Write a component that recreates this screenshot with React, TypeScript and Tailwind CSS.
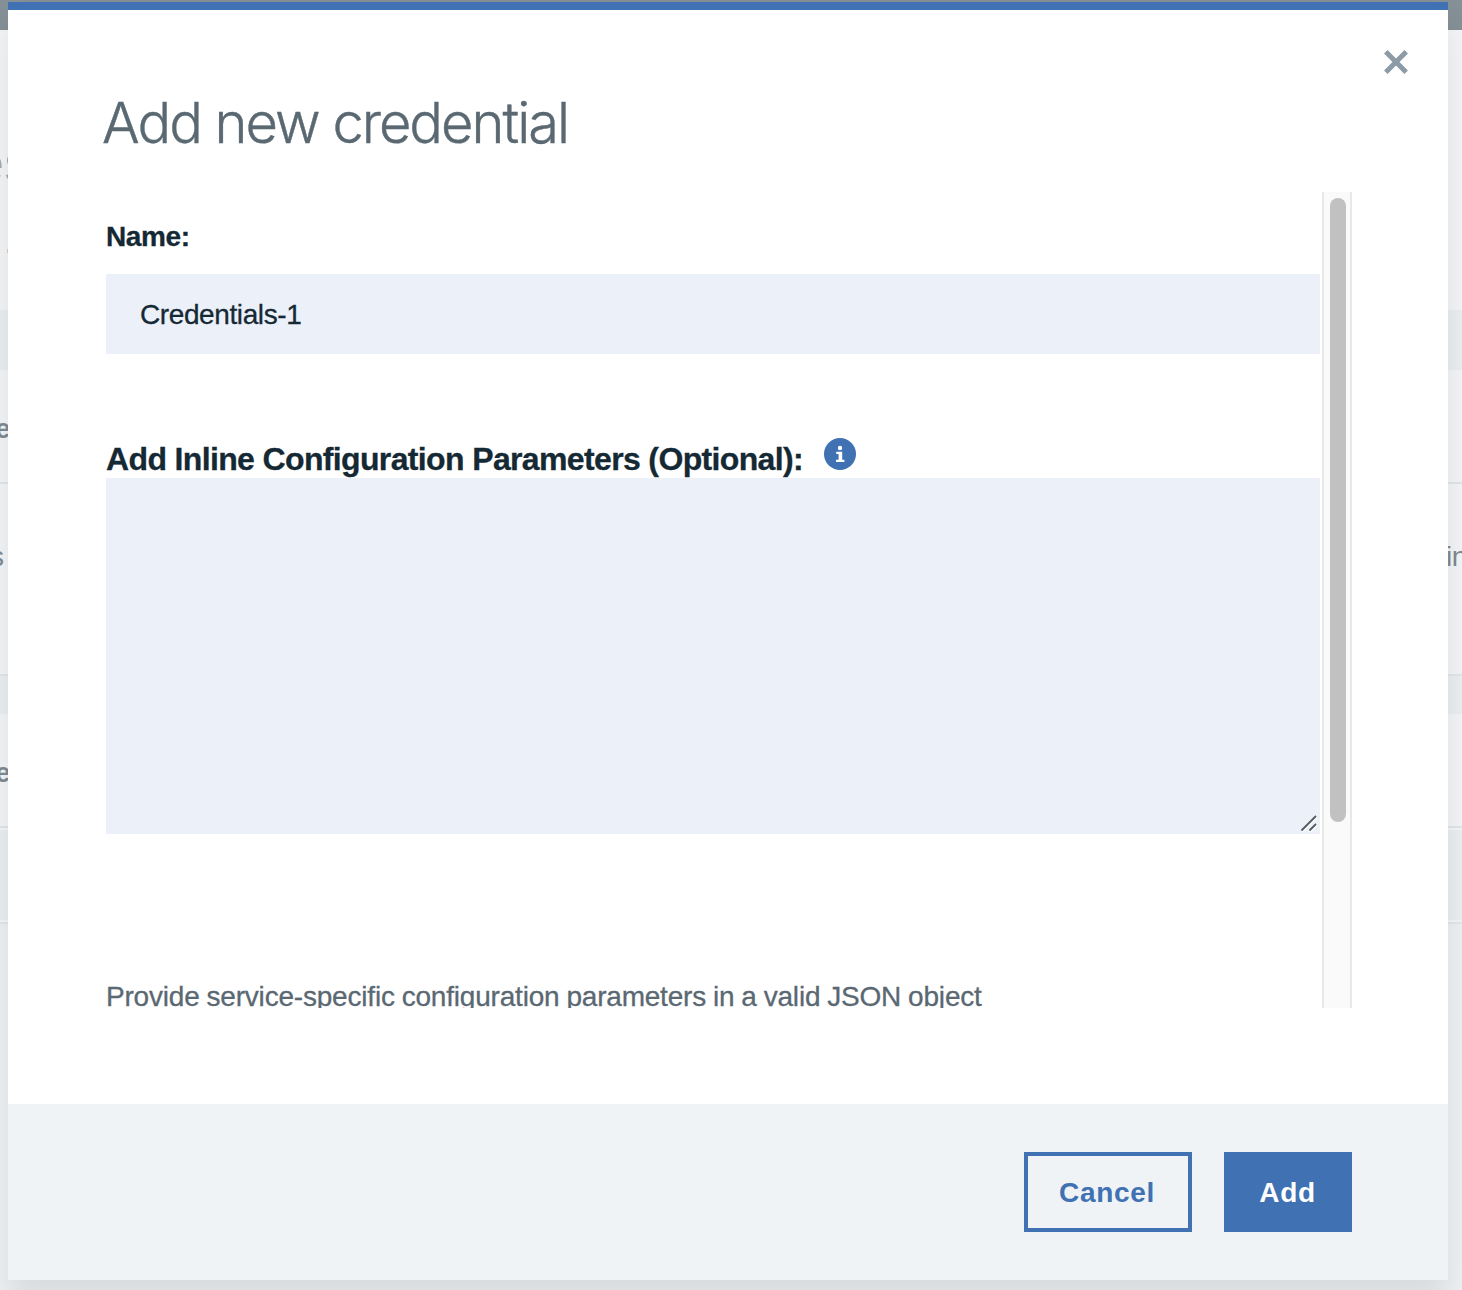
import React from "react";

function Backdrop() {
  return (
    <div
      aria-hidden="true"
      className="flex h-full w-full flex-col bg-[#f5f6f7] font-['Liberation_Sans',Arial,sans-serif] whitespace-nowrap text-[#7f8b93]"
    >
      <div className="h-[30px] bg-[#859196]" />
      <div className="h-[280px] overflow-hidden pt-[103px]">
        <div className="-ml-[27px] text-[56px] leading-[60px] text-[#a4adb2]">es</div>
        <div className="mt-[56px] ml-[7px] size-1 bg-[#d5cfc8]" />
      </div>
      <div className="h-[60px] bg-[#ebf0f3]" />
      <div className="flex h-[114px] items-center border-b-2 border-[#e4e7e9] pt-1.5">
        <span className="-ml-[5px] text-[28px] font-bold">e</span>
      </div>
      <div className="flex h-[190px] justify-between overflow-hidden pt-[57px] text-[28px] leading-8">
        <span className="-ml-[10px]">s</span>
        <span className="w-[16px] tracking-[-0.5px]">in</span>
      </div>
      <div className="h-[40px] border-t-2 border-[#e4e8eb] bg-[#ebf0f3]" />
      <div className="flex h-[114px] items-center border-b-2 border-[#e4e7e9] pt-1.5">
        <span className="-ml-[5px] text-[28px] font-bold">e</span>
      </div>
      <div className="h-[94px] border-y-2 border-[#f5f6f7] bg-[#ebf0f3]" />
      <div className="flex-1 border-t-2 border-[#e4e8eb] bg-[#eef2f5]" />
    </div>
  );
}

function InfoIcon() {
  return (
    <svg width="32" height="32" viewBox="0 0 32 32" aria-label="Information">
      <circle cx="16" cy="16" r="16" fill="#4071b3" />
      <circle cx="16" cy="10" r="2.2" fill="#fff" />
      <path d="M12.2 13.8h6v8h2.2v2.2h-8.4v-2.2h2.6v-5.8h-2.4z" fill="#fff" />
    </svg>
  );
}

function ScrollBar() {
  return (
    <div className="h-full w-[30px] border-x-2 border-[#e8e8e8] bg-[#fafafa] px-1.5 pt-1.5">
      <div className="h-[624px] w-4 rounded-full bg-[#c1c1c1]" />
    </div>
  );
}

export default function App() {
  return (
    <div className="relative h-[1290px] w-[1462px] overflow-hidden">
      <Backdrop />
      <div
        role="dialog"
        className="absolute top-[2px] left-2 flex h-[1278px] w-[1440px] flex-col border-t-8 border-[#4071b3] bg-white font-['Liberation_Sans',Arial,sans-serif] whitespace-nowrap shadow-[0_20px_32px_rgba(0,0,0,0.1)]"
      >
        <header className="flex h-[182px] justify-between pr-10 pl-[94px]">
          <h1 className="mt-[79px] font-['Inter',sans-serif] text-[56px] leading-[68px] font-light tracking-[-2px] text-[#5a6872] [-webkit-text-stroke:0.4px_#5a6872]">
            Add new credential
          </h1>
          <button aria-label="Close" className="mt-10 size-6">
            <svg width="24" height="24" viewBox="0 0 24 24" stroke="#8c9ba5" strokeWidth="5">
              <path d="M1.8 1.8 22.2 22.2M22.2 1.8 1.8 22.2" />
            </svg>
          </button>
        </header>
        <div className="mr-24 ml-[98px] flex h-[816px] justify-between overflow-hidden">
          <div className="w-[1214px]">
            <label className="mt-[29px] block text-[28px] leading-8 font-bold tracking-[-0.4px] text-[#152934] [-webkit-text-stroke:0.3px_#152934]">
              Name:
            </label>
            <div className="mt-[21px] flex h-20 items-center bg-[#ecf0f9] pt-px pl-[34px] text-[28px] tracking-[-0.4px] text-[#152934] [-webkit-text-stroke:0.3px_#152934]">
              Credentials-1
            </div>
            <div className="mt-[84px] flex h-10 items-start">
              <label className="w-[718px] pt-[2px] text-[32px] leading-[38px] font-bold tracking-[-0.64px] text-[#152934] [-webkit-text-stroke:0.3px_#152934]">
                Add Inline Configuration Parameters (Optional):
              </label>
              <InfoIcon />
            </div>
            <div className="flex h-[356px] items-end justify-end bg-[#ecf0f9] pr-[3px] pb-[2px]">
              <svg width="17" height="17" viewBox="0 0 17 17" fill="none" strokeWidth="1.8">
                <path d="M2 17 17 2M10 17l7-7" stroke="#fff" />
                <path d="M1.5 15.5 16 1M9.5 15.5 16 9" stroke="#555b61" />
              </svg>
            </div>
            <p className="mt-[147px] text-[28px] leading-8 tracking-[-0.2px] text-[#5a6872] [word-spacing:-0.6px] [-webkit-text-stroke:0.3px_#5a6872]">
              Provide service-specific configuration parameters in a valid JSON object
            </p>
          </div>
          <ScrollBar />
        </div>
        <footer className="mt-auto flex h-44 items-start justify-end gap-8 bg-[#eff3f6] px-24 pt-12 text-[28px] font-bold">
          <button className="h-20 w-[168px] border-4 border-[#4071b3] pt-0.5 pr-0.5 tracking-[0.7px] text-[#4071b3]">
            Cancel
          </button>
          <button className="h-20 w-32 bg-[#4071b3] pt-0.5 pr-px tracking-[0.7px] text-white">
            Add
          </button>
        </footer>
      </div>
    </div>
  );
}
